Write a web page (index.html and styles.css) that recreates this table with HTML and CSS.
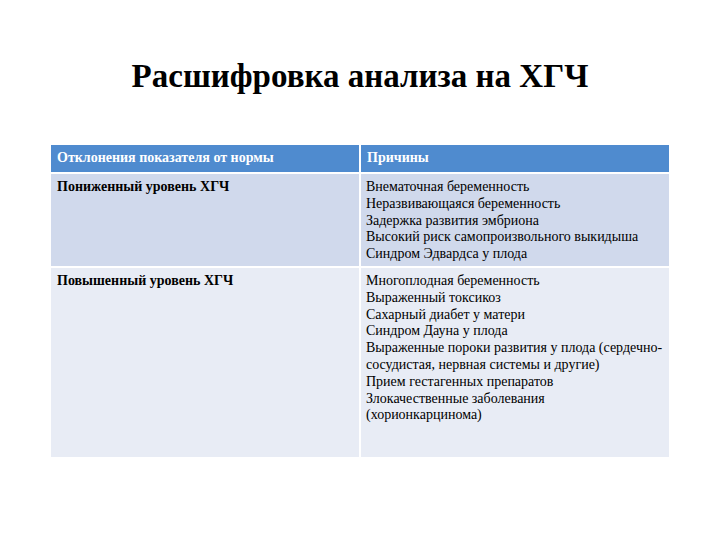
FILE: index.html
```html
<!DOCTYPE html>
<html lang="ru">
<head>
<meta charset="utf-8">
<link rel="stylesheet" href="styles.css">
</head>
<body>
<div class="slide">
  <h1 class="title">Расшифровка анализа на ХГЧ</h1>
  <table class="tbl">
    <thead>
      <tr>
        <th class="c1">Отклонения показателя от нормы</th>
        <th class="c2">Причины</th>
      </tr>
    </thead>
    <tbody>
      <tr class="r1">
        <td class="lbl">Пониженный уровень ХГЧ</td>
        <td class="txt">Внематочная беременность<br>Неразвивающаяся беременность<br>Задержка развития эмбриона<br>Высокий риск самопроизвольного выкидыша<br>Синдром Эдвардса у плода</td>
      </tr>
      <tr class="r2">
        <td class="lbl">Повышенный уровень ХГЧ</td>
        <td class="txt">Многоплодная беременность<br>Выраженный токсикоз<br>Сахарный диабет у матери<br>Синдром Дауна у плода<br>Выраженные пороки развития у плода (сердечно-<br>сосудистая, нервная системы и другие)<br>Прием гестагенных препаратов<br>Злокачественные заболевания<br>(хорионкарцинома)</td>
      </tr>
    </tbody>
  </table>
</div>
</body>
</html>
```

FILE: styles.css
```css
html, body {
  margin: 0;
  padding: 0;
  background: #ffffff;
  font-family: "Liberation Serif", serif;
}
.slide {
  width: 720px;
  height: 540px;
  box-sizing: border-box;
  padding-top: 56px;
  color: #000;
}
.title {
  margin: 0;
  font-family: "Liberation Serif", serif;
  font-size: 33px;
  font-weight: bold;
  text-align: center;
  line-height: 40px;
  height: 40px;
}
.tbl {
  margin: 47px 0 0 49px;
  width: 622px;
  border-collapse: separate;
  border-spacing: 2px;
  table-layout: fixed;
}
.tbl th, .tbl td {
  font-family: "Liberation Serif", serif;
  font-size: 14px;
  line-height: 16.8px;
}
.tbl th {
  background: #4f8bcf;
  color: #ffffff;
  font-weight: bold;
  text-align: left;
  height: 27px;
  padding: 0 6px;
  vertical-align: middle;
}
.tbl td {
  padding: 5px 6px 3px 6px;
  vertical-align: top;
}
.tbl td.txt { padding-left: 5px; }
.c1 { width: 296px; }
.r1 td { background: #d0d9ec; height: 81px; }
.r2 td { background: #e8ecf5; height: 181px; }
.lbl { font-weight: bold; }
```
